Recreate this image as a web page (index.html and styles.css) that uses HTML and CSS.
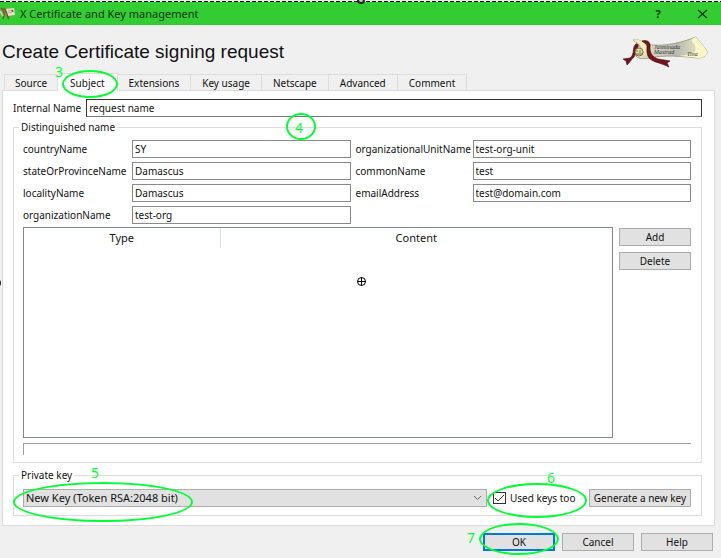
FILE: index.html
```html
<!DOCTYPE html>
<html lang="en">
<head>
    <meta charset="UTF-8">
    <meta name="viewport" content="width=device-width, initial-scale=1.0">
    <title>X Certificate and Key management</title>
    <link rel="stylesheet" href="styles.css">
</head>
<body>
    <div class="window">
        <div class="selection-edge"></div>
        <header class="titlebar">
            <svg class="app-icon" width="15" height="14" viewBox="0 0 15 14">
                <path d="M5 2 L14 1 L15 8 L8 9 Z" fill="#e9dfc8"/>
                <path d="M8 4 L13 3 M8 6 L12 5" stroke="#c9a890"/>
                <path d="M1 1 C4 3 5 7 3 12 M4 1 C7 4 6 8 9 12 M12 3 L13 5" stroke="#8c4a3a" stroke-width="1.6" fill="none"/>
                <path d="M0 4 L3 9" stroke="#d8d0b8" stroke-width="1.5"/>
            </svg>
            <span class="titlebar-text">X Certificate and Key management</span>
            <button class="title-btn" aria-label="Help">?</button>
            <button class="title-btn" aria-label="Close">
                <svg width="11" height="10" viewBox="0 0 11 10"><path d="M1 1 L10 9 M10 1 L1 9" stroke="#0c330c" stroke-width="1.2"/></svg>
            </button>
        </header>

        <div class="heading">
            <h1>Create Certificate signing request</h1>
            <svg class="logo" width="86" height="32" viewBox="0 0 86 32">
                <defs>
                    <linearGradient id="paper" x1="0" y1="0" x2="1" y2="0">
                        <stop offset="0" stop-color="#eee8bd"/>
                        <stop offset="0.3" stop-color="#cfcfc0"/>
                        <stop offset="0.6" stop-color="#b9bab2"/>
                        <stop offset="1" stop-color="#f8f4c4"/>
                    </linearGradient>
                </defs>
                <path d="M11 4 C20 3 23 8 30 9 C45 10 58 7 74 1 C78 7 84 12 85 16 C85 20 80 22 76 22 C58 20 42 19 27 22 C22 23 15 23 14 20 C13 16 20 15 18 11 C17 7 14 7 11 4 Z" fill="url(#paper)" stroke="#8b8867" stroke-width="0.7"/>
                <path d="M74 1 C78 7 84 12 85 16 C85 20 80 22 76 22 C69 21 62 20 56 20 C69 19 76 17 73 10 C73 7 68 5 70 3 Z" fill="#fbf6c8"/>
                <path d="M11 4 C20 3 23 8 30 9 L26 20 C20 18 25 11 11 4 Z" fill="#f5efb9"/>
                <path d="M13 9 C15 6 17 9 16 11 C14 14 14 18 12 21 C9 24 8 26 5 29 L4 25 L1 23 L8 22 C13 18 10 13 13 9 Z" fill="#74151c" stroke="#3f1013" stroke-width="0.6"/>
                <path d="M20 5 C27 3 29 8 28 12 C28 18 31 21 36 23 C41 24 44 24 48 25 L45 27 L47 31 C40 27 33 27 28 23 C24 19 25 14 25 10 C24 7 22 7 20 5 Z" fill="#74151c" stroke="#3f1013" stroke-width="0.6"/>
                <circle cx="17" cy="16" r="4" fill="#ede4aa" stroke="#6b633c" stroke-width="0.9"/>
                <path d="M15 14 V16 M18 14 V17 M14 18 H20" stroke="#5e5733" stroke-width="0.9"/>
                <text class="logo-text" x="32" y="13">Jasminada</text>
                <text class="logo-text" x="32" y="18">Mastrad</text>
                <text class="logo-text" x="65" y="20">Tina</text>
            </svg>
        </div>

        <nav class="tabs">
            <button class="tab">Source</button>
            <button class="tab active">Subject<span class="ring ring-tab"></span><span class="step step-tab">3</span></button>
            <button class="tab">Extensions</button>
            <button class="tab">Key usage</button>
            <button class="tab">Netscape</button>
            <button class="tab">Advanced</button>
            <button class="tab">Comment</button>
        </nav>

        <main class="pane">
            <div class="internal">
                <label for="internal">Internal Name</label>
                <input type="text" id="internal" value="request name">
            </div>

            <fieldset class="group names">
                <legend>Distinguished name</legend>
                <span class="ring ring-names">4</span>
                <div class="fields">
                    <label for="country">countryName</label>
                    <input type="text" id="country" value="SY">
                    <label for="unit">organizationalUnitName</label>
                    <input type="text" id="unit" value="test-org-unit">
                    <label for="state">stateOrProvinceName</label>
                    <input type="text" id="state" value="Damascus">
                    <label for="common">commonName</label>
                    <input type="text" id="common" value="test">
                    <label for="locality">localityName</label>
                    <input type="text" id="locality" value="Damascus">
                    <label for="email">emailAddress</label>
                    <input type="text" id="email" value="test@domain.com">
                    <label for="org">organizationName</label>
                    <input type="text" id="org" value="test-org">
                </div>
                <div class="entries">
                    <div class="table-box">
                        <table>
                            <thead>
                                <tr><th class="col-type">Type</th><th>Content</th></tr>
                            </thead>
                        </table>
                    </div>
                    <div class="entry-buttons">
                        <button class="btn">Add</button>
                        <button class="btn">Delete</button>
                    </div>
                </div>
                <div class="status"></div>
            </fieldset>

            <fieldset class="group key">
                <legend>Private key</legend>
                <span class="ring ring-key"></span>
                <span class="step step-key">5</span>
                <div class="key-row">
                    <select aria-label="Private key">
                        <option>New Key (Token RSA:2048 bit)</option>
                    </select>
                    <label class="check">
                        <input type="checkbox" checked>Used keys too
                        <span class="ring ring-check"></span>
                        <span class="step step-check">6</span>
                    </label>
                    <button class="btn generate">Generate a new key</button>
                </div>
            </fieldset>
        </main>

        <footer class="actions">
            <div class="ok">
                <button class="btn default">OK</button>
                <span class="ring ring-ok"></span>
                <span class="step step-ok">7</span>
            </div>
            <button class="btn">Cancel</button>
            <button class="btn">Help</button>
        </footer>

        <!-- selection handles -->
        <span class="handle handle-top"></span>
        <span class="handle handle-left"></span>
        <svg class="crosshair" width="11" height="11" viewBox="0 0 11 11">
            <circle cx="5.5" cy="5.5" r="4" fill="#fff" stroke="#000"/>
            <path d="M5.5 1 V10 M1 5.5 H10" stroke="#000"/>
        </svg>
    </div>
</body>
</html>
```
FILE: styles.css
```css
* {
    box-sizing: border-box;
}

body {
    margin: 0;
    background-color: #f0f0f0;
    color: #111;
    font-family: "Noto Sans", "Open Sans", sans-serif;
    font-size: 10px;
    line-height: 14px;
}

button, input, select {
    font: inherit;
    color: inherit;
    margin: 0;
}

.window {
    position: relative;
    display: flex;
    flex-direction: column;
    min-height: 100vh;
    padding-bottom: 7px;
    overflow: hidden;
}

.selection-edge {
    height: 2px;
    background: repeating-linear-gradient(to right, #000 0, #000 4px, #dff5df 4px, #dff5df 6px);
    border-top: 1px solid #dff5df;
}

/* title bar */
.titlebar {
    display: flex;
    align-items: center;
    height: 23px;
    padding-right: 5px;
    background-color: #33cc33;
    color: #0c330c;
    font-size: 11px;
}

.titlebar-text {
    flex: 1;
    margin-left: 5px;
}

.title-btn {
    display: flex;
    align-items: center;
    justify-content: center;
    width: 28px;
    height: 20px;
    margin-left: 16px;
    padding: 0;
    border: none;
    background: none;
    font-weight: bold;
}

.heading {
    display: flex;
    justify-content: space-between;
    align-items: center;
    height: 48px;
    padding: 6px 13px 0 2px;
}

h1 {
    margin: 0;
    font-family: "Liberation Sans", Arial, sans-serif;
    font-size: 19px;
    font-weight: normal;
    line-height: 20px;
}

.logo-text {
    font-family: "Liberation Serif", serif;
    font-size: 6px;
    font-style: italic;
    fill: #333;
}

/* tabs */
.tabs {
    display: flex;
    align-items: flex-end;
    padding-left: 4px;
}

.tab {
    height: 16px;
    padding: 0 11px;
    border: 1px solid #dcdcdc;
    border-width: 1px 1px 0 0;
    background-color: #f0f0f0;
    line-height: 14px;
}

.tab:first-child {
    padding: 0 10px;
    border-left-width: 1px;
}

.tab.active {
    position: relative;
    z-index: 1;
    height: 18px;
    margin-bottom: -1px;
    padding: 0 12px;
    background-color: #fff;
}

.pane {
    flex: 1;
    display: flex;
    flex-direction: column;
    margin: 0 6px 0 2px;
    padding: 8px 12px 9px 10px;
    border: 1px solid #dcdcdc;
    background-color: #fff;
}

.internal {
    display: flex;
    align-items: center;
    gap: 5px;
    margin-bottom: 3px;
}

.internal input {
    flex: 1;
}

input[type="text"] {
    width: 100%;
    min-width: 0;
    height: 18px;
    padding: 0 2px;
    border: 1px solid #8a8a8a;
    background-color: #fff;
}

.internal input[type="text"] {
    border-color: #333 #333 #777;
}

/* group boxes */
.group {
    position: relative;
    min-width: 0;
    margin: 0;
    padding: 6px 10px 6px 9px;
    border: 1px solid #dcdcdc;
}

legend {
    margin-left: -4px;
    padding: 0 2px;
}

.names {
    flex: 1;
    margin-bottom: 5px;
}

.fields {
    display: grid;
    grid-template-columns: 104px 1fr 112px 1fr;
    gap: 4px 5px;
    align-items: center;
}

.entries {
    display: flex;
    gap: 6px;
    margin-top: 3px;
}

.table-box {
    flex: 1;
    min-height: 211px;
    border: 1px solid #828790;
}

table {
    width: 100%;
    border-collapse: collapse;
    font-size: 11px;
}

th {
    height: 20px;
    padding: 0;
    font-weight: normal;
}

.col-type {
    width: 196px;
    border-right: 1px solid #e0e0e0;
}

.entry-buttons {
    display: flex;
    flex-direction: column;
    gap: 6px;
    padding-top: 1px;
}

.btn {
    width: 72px;
    height: 18px;
    padding: 0;
    border: 1px solid #adadad;
    background-color: #e1e1e1;
    line-height: 14px;
}

.status {
    height: 12px;
    margin-top: 5px;
    border: 1px solid #a0a0a0;
    border-width: 1px 0 0 1px;
}

/* private key */
.group.key {
    padding: 7px 10px 8px 9px;
}

.key-row {
    display: flex;
    align-items: center;
    gap: 6px;
}

select {
    flex: 1;
    min-width: 0;
    height: 18px;
    padding: 0 2px;
    border: 1px solid #adadad;
    border-radius: 0;
    appearance: none;
    background: #e1e1e1 url("data:image/svg+xml,%3Csvg xmlns='http://www.w3.org/2000/svg' width='9' height='6'%3E%3Cpath d='M1 1L4.5 4.5L8 1' fill='none' stroke='%23666'/%3E%3C/svg%3E") no-repeat right 4px center;
    font-size: 11px;
}

.check {
    position: relative;
    display: flex;
    align-items: center;
    gap: 4px;
    width: 90px;
    white-space: nowrap;
}

.check input {
    flex: none;
    width: 13px;
    height: 12px;
    border: 1px solid #333;
    appearance: none;
    background: #fff url("data:image/svg+xml,%3Csvg xmlns='http://www.w3.org/2000/svg' width='11' height='10'%3E%3Cpath d='M1 5L4 8L10 2' fill='none' stroke='%23333'/%3E%3C/svg%3E") no-repeat center;
}

.generate {
    width: 102px;
    white-space: nowrap;
}

.actions {
    display: flex;
    justify-content: flex-end;
    gap: 7px;
    padding: 7px 8px 0 0;
}

.ok {
    position: relative;
    display: flex;
}

.btn.default {
    border: 2px solid #0078d7;
}

/* green step marks */
.ring {
    position: absolute;
    border: 2px solid #00ff33;
    border-radius: 50%;
    pointer-events: none;
}

.step, .ring-names {
    color: #00ff33;
    font-size: 14px;
    line-height: 16px;
}

.step {
    position: absolute;
}

.ring-tab {
    left: 4px;
    top: -4px;
    width: 56px;
    height: 28px;
}

.step-tab {
    left: -3px;
    top: -10px;
}

.ring-names {
    left: 272px;
    top: -21px;
    width: 30px;
    height: 27px;
    line-height: 26px;
    padding-right: 4px;
    text-align: center;
}

.ring-key {
    left: -1px;
    top: 0;
    width: 180px;
    height: 40px;
}

.step-key {
    left: 77px;
    top: -17px;
}

.ring-check {
    left: -6px;
    top: -8px;
    width: 100px;
    height: 35px;
}

.step-check {
    left: 54px;
    top: -21px;
}

.ring-ok {
    left: -4px;
    top: -10px;
    width: 80px;
    height: 32px;
}

.step-ok {
    left: -16px;
    top: -3px;
}

.handle {
    position: absolute;
    width: 8px;
    height: 8px;
    border: 2px solid #222;
    border-radius: 50%;
    background-color: #ccc;
}

.handle-top {
    left: 50%;
    top: -4px;
    margin-left: -4px;
}

.handle-left {
    left: -7px;
    top: 50%;
}

.crosshair {
    position: absolute;
    left: 50%;
    top: 50%;
    margin: -3px 0 0 -5px;
}
```
